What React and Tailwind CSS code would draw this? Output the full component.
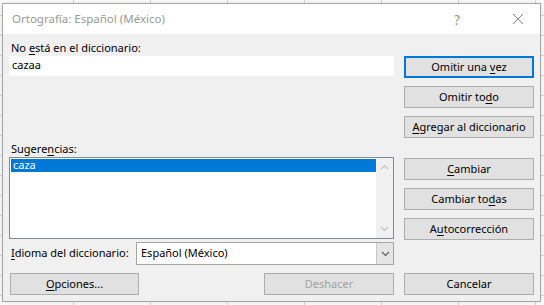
import React from 'react';

const Btn = ({ children, focused, disabled, className = '' }) => (
    <button
        className={`h-[22px] flex items-center justify-center bg-[#e1e1e1] text-[11px] ${
            focused ? 'border-2 border-[#0078d7]' : 'border border-[#adadad]'
        } ${disabled ? 'text-[#a0a0a0]' : 'text-black'} ${className}`}
    >
        <span>{children}</span>
    </button>
);

const U = ({ children }) => <span className="underline underline-offset-2">{children}</span>;

const Chevron = ({ up, color = '#c2c2c2' }) => (
    <svg width="9" height="6" viewBox="0 0 9 6">
        <path d={up ? 'M1 5 L4.5 1.5 L8 5' : 'M1 1 L4.5 4.5 L8 1'} fill="none" stroke={color} strokeWidth="1.2" />
    </svg>
);

const App = () => {
    return (
        <div className="w-[544px] h-[305px] pl-[2px] pt-[3px] bg-white bg-[linear-gradient(to_right,#d9d9d9_1px,transparent_1px),linear-gradient(to_bottom,#d9d9d9_1px,transparent_1px)] bg-size-[77px_20px] bg-position-[-4px_15px] font-['Segoe_UI','Noto_Sans',sans-serif]">
            <div className="w-[539px] h-[299px] border border-[#a6a6a6] bg-[#f0f0f0] flex flex-col shadow-[0_0_6px_rgba(0,0,0,0.15)]">
                {/* title bar */}
                <div className="h-[30px] bg-white flex items-center pl-[9px] pr-[16px] shrink-0">
                    <span className="text-[11.5px] text-[#999999] flex-1">Ortografía: Español (México)</span>
                    <span className="text-[14px] text-[#999999] mr-[52px]">?</span>
                    <svg width="12" height="12" viewBox="0 0 12 12">
                        <path d="M1 1 L11 11 M11 1 L1 11" stroke="#8a8a8a" strokeWidth="1" />
                    </svg>
                </div>

                {/* body */}
                <div className="flex-1 pl-[6px] pt-[5px] text-[11px] text-black">
                    <div className="flex">
                        <div className="w-[385px] flex flex-col">
                            <div className="h-[17px] leading-[17px] pl-[2px]">
                                No <U>e</U>stá en el diccionario:
                            </div>
                            <div className="h-[20px] bg-white pl-[3px] leading-[18px]">cazaa</div>
                            <div className="mt-[64px] h-[17px] leading-[17px] pl-[2px]">
                                Sugere<U>n</U>cias:
                            </div>
                            <div className="h-[82px] border border-[#828790] bg-white flex">
                                <div className="flex-1 pl-[1px] pt-[1px]">
                                    <div className="h-[13px] bg-[#0078d7] text-white leading-[12px] pl-[2px]">caza</div>
                                </div>
                                <div className="w-[17px] bg-[#f0f0f0] flex flex-col items-center justify-between py-[6px]">
                                    <Chevron up />
                                    <Chevron />
                                </div>
                            </div>
                            <div className="mt-[3px] flex items-center h-[23px]">
                                <span className="w-[127px] pl-[2px] whitespace-nowrap">
                                    <U>I</U>dioma del diccionario:
                                </span>
                                <div className="flex-1 h-[23px] border border-[#a6a6a6] bg-white flex items-center">
                                    <span className="flex-1 pl-[4px]">Español (México)</span>
                                    <div className="w-[17px] h-full bg-[#e5e5e5] border-l border-[#c8c8c8] flex items-center justify-center">
                                        <Chevron color="#606060" />
                                    </div>
                                </div>
                            </div>
                        </div>

                        <div className="ml-[10px] w-[130px] flex flex-col pt-[17px] gap-[8px]">
                            <Btn focused>
                                Omitir una <U>v</U>ez
                            </Btn>
                            <Btn>
                                Omitir to<U>d</U>o
                            </Btn>
                            <Btn>
                                <U>A</U>gregar al diccionario
                            </Btn>
                            <Btn className="mt-[12px]">
                                <U>C</U>ambiar
                            </Btn>
                            <Btn>
                                Cambiar to<U>d</U>as
                            </Btn>
                            <Btn>
                                A<U>u</U>tocorrección
                            </Btn>
                        </div>
                    </div>

                    <div className="flex mt-[8px]">
                        <Btn className="w-[129px] ml-[1px]">
                            <U>O</U>pciones...
                        </Btn>
                        <Btn disabled className="w-[130px] ml-[125px]">
                            Deshacer
                        </Btn>
                        <Btn className="w-[130px] ml-[10px]">Cancelar</Btn>
                    </div>
                </div>
            </div>
        </div>
    );
};

export default App;
